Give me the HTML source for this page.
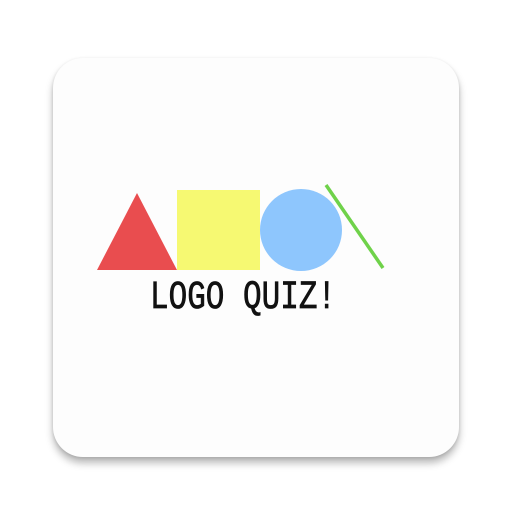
<!DOCTYPE html>
<html><head><style>
html,body{margin:0;padding:0;width:512px;height:512px;background:#fff;overflow:hidden}
.card{position:absolute;left:53px;top:58px;width:406px;height:399px;border-radius:30px;background:#fdfdfd;box-shadow:0 6px 8px rgba(0,0,0,0.28),0 1px 3px rgba(0,0,0,0.12)}
.t{position:absolute;left:150px;top:278px;font-family:"Liberation Mono",monospace;font-size:31px;font-weight:normal;color:#111;transform:scaleY(1.3);transform-origin:left top;line-height:31px;white-space:nowrap;-webkit-text-stroke:0.6px #111}
</style></head><body>
<div class="card"></div>
<svg width="512" height="512" style="position:absolute;left:0;top:0">
<polygon points="137,193 97,270 177,270" fill="#e94d4f"/>
<rect x="177" y="190" width="83" height="80" fill="#f6f972"/>
<circle cx="301" cy="230" r="41" fill="#8ec6fd"/>
<line x1="326" y1="185" x2="383" y2="268" stroke="#6fd24a" stroke-width="3.5"/>
</svg>
<div class="t">LOGO QUIZ!</div>
</body></html>
